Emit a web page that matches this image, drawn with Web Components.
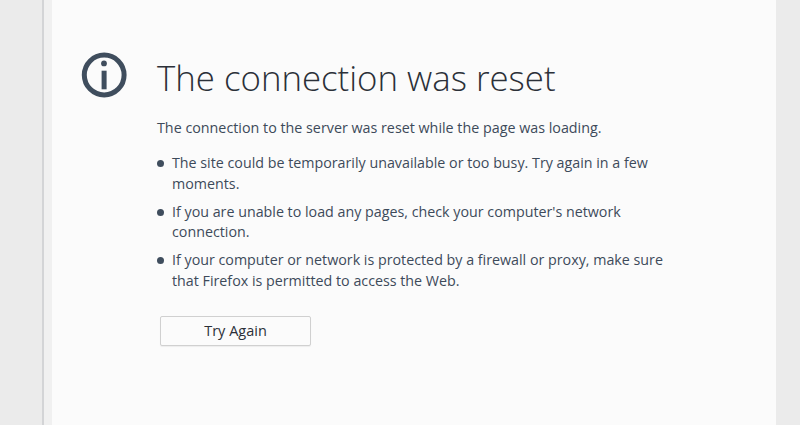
<!DOCTYPE html>
<html>
<head>
<meta charset="utf-8">
<title>The connection was reset</title>
<style>
    html, body { margin: 0; height: 100%; }
    body { background: #ebebeb; overflow: hidden; }
</style>
</head>
<body>
<browser-frame>
    <error-page heading="The connection was reset">
        <p>The connection to the server was reset while the page was loading.</p>
        <error-item>The site could be temporarily unavailable or too busy. Try again in a few moments.</error-item>
        <error-item>If you are unable to load any pages, check your computer's network connection.</error-item>
        <error-item>If your computer or network is protected by a firewall or proxy, make sure that Firefox is permitted to access the Web.</error-item>
        <retry-button slot="action">Try Again</retry-button>
    </error-page>
</browser-frame>

<script>
class BrowserFrame extends HTMLElement {
    constructor() {
        super();
        this.attachShadow({ mode: 'open' });
        this.shadowRoot.innerHTML = `
        <style>
            :host {
                display: flex;
                height: 425px;
                width: 800px;
                background: #ebebeb;
            }
            .gutter {
                width: 42px;
                flex: none;
            }
            .edge {
                width: 8px;
                flex: none;
                background: #f0f0f0;
                border-left: 2px solid #d3d4d6;
            }
            .page {
                width: 724px;
                flex: none;
                background: #fbfbfb;
            }
        </style>
        <div class="gutter"></div>
        <div class="edge"></div>
        <div class="page"><slot></slot></div>
        `;
    }
}
customElements.define("browser-frame", BrowserFrame);

class ErrorPage extends HTMLElement {
    constructor() {
        super();
        this.attachShadow({ mode: 'open' });
    }

    connectedCallback() {
        const heading = this.getAttribute("heading");
        this.shadowRoot.innerHTML = `
        <style>
            :host {
                display: grid;
                grid-template-columns: 105px 515px;
                font-family: "Open Sans", "Noto Sans", sans-serif;
                color: #3d4a5a;
                padding-top: 50px;
            }
            .icon {
                padding-left: 29px;
                padding-top: 2px;
            }
            .icon svg { display: block; }
            h1 {
                margin: 0;
                height: 67px;
                font-size: 34.8px;
                line-height: 56px;
                font-weight: 300;
                color: #2b3038;
            }
            ::slotted(p) {
                margin: 0 0 15px;
                font-size: 14.3px;
                line-height: 21px;
            }
            .action { padding: 17px 0 0 3px; }
        </style>
        <div class="icon">
            <svg width="46" height="46" viewBox="0 0 46 46">
                <circle cx="23.2" cy="23" r="19.9" fill="none" stroke="#3f4d5d" stroke-width="5"/>
                <circle cx="23" cy="11.4" r="2.9" fill="#3f4d5d"/>
                <rect x="20.6" y="18.7" width="5" height="18.6" fill="#3f4d5d"/>
            </svg>
        </div>
        <div>
            <h1>${heading}</h1>
            <slot></slot>
            <div class="action"><slot name="action"></slot></div>
        </div>
        `;
    }
}
customElements.define("error-page", ErrorPage);

class ErrorItem extends HTMLElement {
    constructor() {
        super();
        this.attachShadow({ mode: 'open' });
        this.shadowRoot.innerHTML = `
        <style>
            :host {
                display: flex;
                font-size: 14.27px;
                line-height: 20.8px;
                margin-bottom: 7px;
            }
            .dot {
                flex: none;
                width: 7px;
                height: 7px;
                border-radius: 50%;
                background: #3f4d5d;
                margin: 7px 8px 0 0;
            }
        </style>
        <span class="dot"></span>
        <span><slot></slot></span>
        `;
    }
}
customElements.define("error-item", ErrorItem);

class RetryButton extends HTMLElement {
    constructor() {
        super();
        this.attachShadow({ mode: 'open' });
        this.shadowRoot.innerHTML = `
        <style>
            :host { display: block; width: 151px; }
            button {
                display: block;
                width: 100%;
                height: 30px;
                padding: 0;
                font: inherit;
                font-size: 14.5px;
                color: #2b3038;
                background: #fbfbfb;
                border: 1px solid #d0d0d0;
                border-radius: 2px;
                box-shadow: 0 1px 1px rgba(0, 0, 0, 0.06);
            }
        </style>
        <button><slot></slot></button>
        `;
    }
}
customElements.define("retry-button", RetryButton);
</script>
</body>
</html>
